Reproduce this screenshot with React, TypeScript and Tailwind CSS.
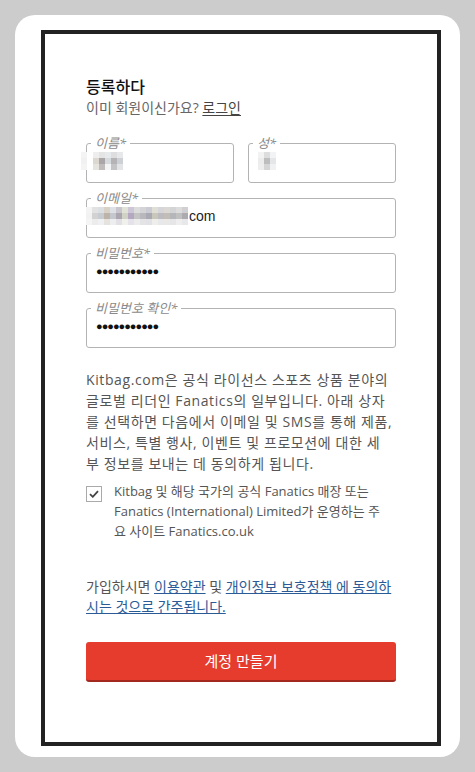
import React from 'react';

const FONT = '"Open Sans", "Noto Sans CJK KR", sans-serif';

// pixelated placeholder for redacted values
const PixelBlur: React.FC<{ cols: string[][]; className?: string }> = ({ cols, className }) => (
  <span className={`inline-flex align-middle ${className ?? ''}`}>
    {cols.map((col, i) => (
      <span key={i} className="flex flex-col">
        {col.map((c, j) => (
          <span key={j} className="block w-[6px] h-[6px]" style={{ backgroundColor: c }} />
        ))}
      </span>
    ))}
  </span>
);

const firstNameBlur = [
  ['#f4f4f4', '#f1f1f1', '#f4f4f4'],
  ['#ffffff', '#ffffff', '#ffffff'],
  ['#eeeeee', '#dcd8d0', '#e6e4de'],
  ['#e4e4e4', '#aaa5a8', '#c0bcbc'],
  ['#e7eaec', '#d6dadd', '#f2f4f6'],
  ['#dedede', '#b5b3b5', '#c4c4c6'],
  ['#e6e8ea', '#cdd0d4', '#e2e4e6'],
];

const lastNameBlur = [
  ['#f2f2f2', '#ececec', '#eeeeee'],
  ['#dddddd', '#bdbdbd', '#d5d5d5'],
  ['#f2f3f4', '#e4e6e8', '#f0f1f2'],
];

const emailBlur = [
  ['#f4f4f4', '#f2f2f2', '#f5f5f5'],
  ['#e2e2e2', '#d2d2d2', '#ececec'],
  ['#dcdfe2', '#c8ccd0', '#eef0f2'],
  ['#d8d2c6', '#bcb4a8', '#e6e2de'],
  ['#dde0e4', '#c4c8ce', '#eceef0'],
  ['#c9c5cc', '#aca6b0', '#e2e0e4'],
  ['#e0e2d8', '#cfd2c4', '#f0f0ec'],
  ['#cdc6d6', '#b3a8c0', '#e6e2ea'],
  ['#dcdcdc', '#c4c4c4', '#ececec'],
  ['#d4d4d6', '#b8b8bc', '#e4e4e6'],
  ['#cbcbd3', '#a9a9b4', '#e1e1e6'],
  ['#e0dfd6', '#c9c7ba', '#eeeeea'],
  ['#d6d6da', '#bbbbc0', '#e8e8ea'],
  ['#dcd8d4', '#c3bdb8', '#eae8e6'],
  ['#d2d4d6', '#b4b6ba', '#e6e6e8'],
  ['#dcdcdc', '#c0c0c0', '#eeeeee'],
  ['#d0d0d2', '#acacb0', '#e8e8ea'],
];

const Field: React.FC<{ label: string; children?: React.ReactNode }> = ({ label, children }) => (
  <fieldset className="h-[47px] border border-[#b3b3b3] rounded-[3px] px-[9px] min-w-0">
    <legend className="-ml-[5px] px-[4px] text-[13px] leading-[14px] italic text-[#8a8a8a]">{label}</legend>
    <div className="h-[20px] mt-[1px] flex items-center text-[14px] text-[#222]" style={{ fontFamily: '"Liberation Sans", Arial, sans-serif' }}>
      {children}
    </div>
  </fieldset>
);

const Dots = () => <span className="text-[11px] tracking-[-1px] text-[#111]">●●●●●●●●●●●</span>;

export default function App() {
  return (
    <div className="min-h-[772px] w-full bg-[#cccccc] p-[15px]" style={{ fontFamily: FONT }}>
      <div className="bg-white rounded-[20px] h-[742px] pt-[15px] pl-[26px] pr-[19px]">
        <div className="border-[4px] border-[#222222] h-[716px] px-[41px] pt-[42px]">
          <h1 className="text-[16px] leading-[22px] font-medium text-[#111]">등록하다</h1>
          <p className="text-[14px] leading-[20px] text-[#666]">
            이미 회원이신가요? <a href="#" className="underline text-[#444] underline-offset-2">로그인</a>
          </p>

          <div className="mt-[18px] flex flex-col gap-[8px]">
            <div className="grid grid-cols-2 gap-[14px]">
              <Field label="이름*">
                <PixelBlur cols={firstNameBlur} className="-ml-[15px]" />
              </Field>
              <Field label="성*">
                <PixelBlur cols={lastNameBlur} />
              </Field>
            </div>
            <Field label="이메일*">
              <PixelBlur cols={emailBlur} className="-ml-[10px]" />
              <span className="ml-[1px]">com</span>
            </Field>
            <Field label="비밀번호*">
              <Dots />
            </Field>
            <Field label="비밀번호 확인*">
              <Dots />
            </Field>
          </div>

          <p className="mt-[21px] mr-[3px] text-[14px] leading-[21px] tracking-[0.6px] text-[#555]">
            Kitbag.com은 공식 라이선스 스포츠 상품 분야의 글로벌 리더인 Fanatics의 일부입니다. 아래 상자를 선택하면 다음에서 이메일 및 SMS를 통해 제품, 서비스, 특별 행사, 이벤트 및 프로모션에 대한 세부 정보를 보내는 데 동의하게 됩니다.
          </p>

          <label className="mt-[7px] flex gap-[12px]">
            <span className="mt-[5px] w-[16px] h-[16px] shrink-0 border border-[#aaaaaa] bg-white flex items-center justify-center">
              <svg width="10" height="8" viewBox="0 0 10 8">
                <path d="M1 4.2 L3.8 6.8 L9 1.2" fill="none" stroke="#444" strokeWidth="1.8" />
              </svg>
            </span>
            <span className="mr-[7px] text-[13px] leading-[20px] text-[#555]">
              Kitbag 및 해당 국가의 공식 Fanatics 매장 또는 Fanatics (International) Limited가 운영하는 주요 사이트 Fanatics.co.uk
            </span>
          </label>

          <p className="mt-[36px] text-[14px] leading-[20px] text-[#555]">
            가입하시면 <a href="#" className="underline text-[#2b5b97]">이용약관</a> 및{' '}
            <a href="#" className="underline text-[#2b5b97]">개인정보 보호정책 에 동의하시는 것으로 간주됩니다.</a>
          </p>

          <button className="mt-[25px] w-full h-[40px] rounded-[3px] bg-[#e53c2e] border-b-[2px] border-[#a3291f] text-white text-[15px]">
            계정 만들기
          </button>
        </div>
      </div>
    </div>
  );
}
